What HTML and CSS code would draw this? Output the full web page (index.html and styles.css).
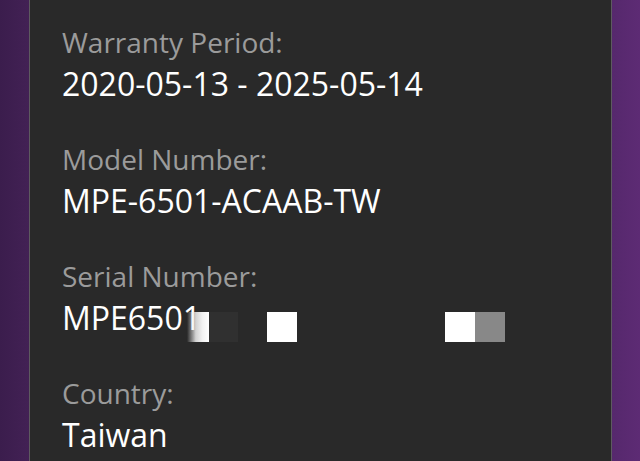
FILE: index.html
```html
<!DOCTYPE html>
<html>
<head>
<meta charset="utf-8">
<link rel="stylesheet" href="styles.css">
</head>
<body>
<div class="page">
  <div class="card">
    <div class="field">
      <div class="label">Warranty Period:</div>
      <div class="value">2020-05-13 - 2025-05-14</div>
    </div>
    <div class="field">
      <div class="label">Model Number:</div>
      <div class="value">MPE-6501-ACAAB-TW</div>
    </div>
    <div class="field">
      <div class="label">Serial Number:</div>
      <div class="value serial">MPE6501
        <span class="mosaic">
          <span class="px fade"></span>
          <span class="px dark"></span>
          <span class="px gap"></span>
          <span class="px white"></span>
          <span class="px wide"></span>
          <span class="px white"></span>
          <span class="px grey"></span>
        </span>
      </div>
    </div>
    <div class="field">
      <div class="label">Country:</div>
      <div class="value">Taiwan</div>
    </div>
  </div>
</div>
</body>
</html>
```

FILE: styles.css
```css
html, body {
  margin: 0;
  padding: 0;
  height: 100%;
  overflow: hidden;
}
body {
  background: linear-gradient(90deg, #3b1d4d 0%, #452257 6%, #53276a 94%, #5d2b74 100%);
  font-family: "Open Sans", "Noto Sans", sans-serif;
}
.page {
  height: 100%;
  padding: 0 28px 0 29px;
  box-sizing: border-box;
}
.card {
  height: 100%;
  background: #292929;
  border-left: 1px solid #5e5a60;
  border-right: 1px solid #5e5a60;
  padding: 22px 32px 0 32px;
  box-sizing: border-box;
  display: flex;
  flex-direction: column;
  gap: 35px;
}
.field {
  display: flex;
  flex-direction: column;
  gap: 2px;
}
.label {
  color: #9b9b9b;
  font-size: 28px;
  line-height: 40px;
}
.value {
  color: #ffffff;
  font-size: 32px;
  line-height: 40px;
  white-space: nowrap;
}
.serial {
  position: relative;
}
.mosaic {
  position: absolute;
  left: 125px;
  top: 14px;
  display: flex;
  height: 30px;
}
.px {
  display: block;
  width: 30px;
  height: 30px;
}
.fade {
  width: 22px;
  background: linear-gradient(90deg, rgba(255,255,255,0) 0%, rgba(240,240,240,0.85) 40%, #f2f2f2 70%, #ffffff 100%);
}
.dark { width: 29px; background: #303030; }
.gap { width: 29px; background: transparent; }
.white { background: #ffffff; }
.wide { width: 148px; background: transparent; }
.grey { background: #888888; }
```
